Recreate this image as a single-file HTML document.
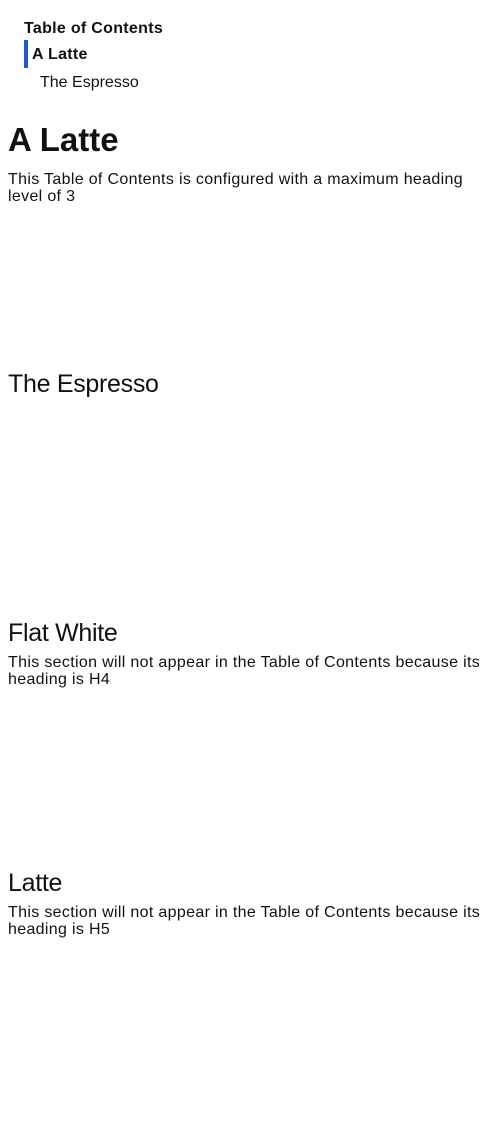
<!DOCTYPE html>
<html><head><meta charset="utf-8"><style>
html,body{margin:0;padding:0;background:#fff;width:500px;height:1128px;overflow:hidden}
body{font-family:"Liberation Sans",sans-serif;color:#111;position:relative}
.a{position:absolute;white-space:nowrap;margin:0}
.b{font-size:16px;line-height:17px;letter-spacing:0.33px}
.h{font-size:25px;line-height:30px;letter-spacing:-0.3px}
</style></head><body>
<div class="a" style="left:24px;top:19px;font-size:16px;font-weight:bold;line-height:20px;letter-spacing:0.3px">Table of Contents</div>
<div class="a" style="left:24px;top:40px;width:4px;height:28px;background:#1f5bc4"></div>
<div class="a" style="left:32px;top:45px;font-size:16px;font-weight:bold;line-height:20px;letter-spacing:0.3px">A Latte</div>
<div class="a" style="left:40px;top:73px;font-size:16px;line-height:20px;letter-spacing:0px">The Espresso</div>
<div class="a" style="left:8px;top:120px;font-size:33px;font-weight:bold;line-height:40px;letter-spacing:0px">A Latte</div>
<div class="a b" style="left:8px;top:171px">This Table of Contents is configured with a maximum heading<br>level of 3</div>
<div class="a h" style="left:8px;top:369px">The Espresso</div>
<div class="a h" style="left:8px;top:618px">Flat White</div>
<div class="a b" style="left:8px;top:654px">This section will not appear in the Table of Contents because its<br>heading is H4</div>
<div class="a h" style="left:8px;top:868px">Latte</div>
<div class="a b" style="left:8px;top:904px">This section will not appear in the Table of Contents because its<br>heading is H5</div>
</body></html>
